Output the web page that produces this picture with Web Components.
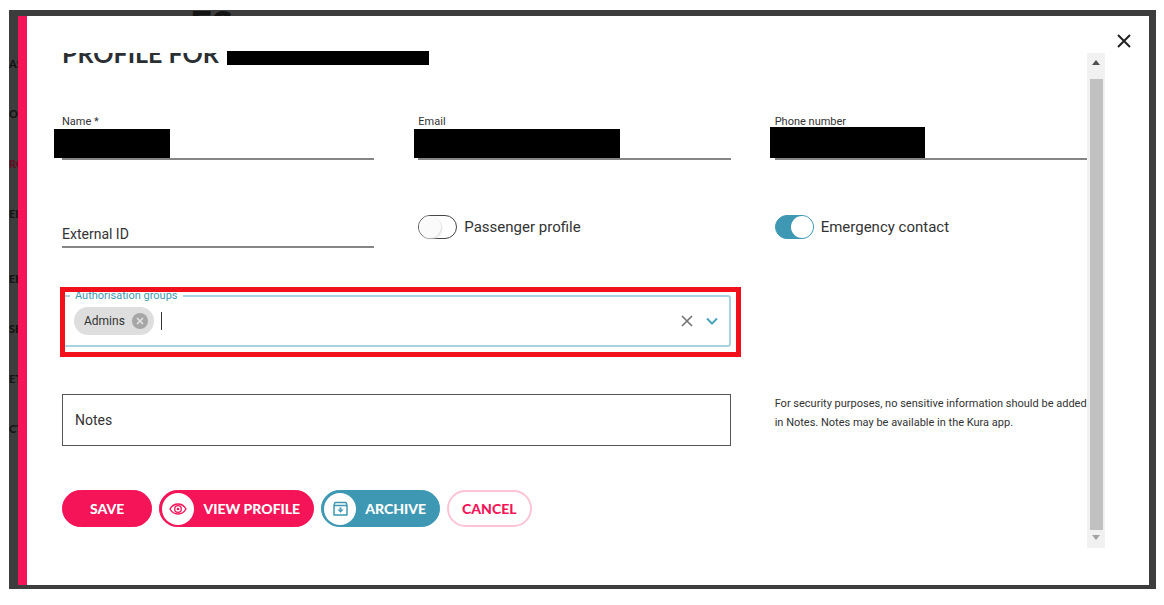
<!DOCTYPE html>
<html lang="en">
<head>
<meta charset="utf-8">
<title>Profile</title>
<style>
html,body{height:100%}
body{margin:0;background:#fff;color:#333;font-family:Roboto,sans-serif;box-sizing:border-box;padding:10px 8px 16px 9px}
</style>
</head>
<body>
<app-shell>
  <side-nav slot="behind"></side-nav>
  <profile-dialog></profile-dialog>
</app-shell>
<script>
const define = (name, html, setup) => {
  const tpl = document.createElement('template');
  tpl.innerHTML = '<style>*{box-sizing:border-box}</style>' + html;
  customElements.define(name, class extends HTMLElement {
    connectedCallback() {
      if (this.shadowRoot) return;
      this.attachShadow({mode: 'open'}).append(tpl.content.cloneNode(true));
      if (setup) setup(this, this.shadowRoot);
    }
  });
};

define('app-shell', `
<style>
:host{display:grid;height:100%;box-sizing:border-box;background:#3d3d3d;grid-template:minmax(0,1fr)/minmax(0,1fr)}
.behind,.front{grid-area:1/1;min-width:0;min-height:0}
.behind{overflow:hidden}
.front{display:grid;padding:6px 7px 4px 9px;position:relative}
</style>
<div class="behind"><slot name="behind"></slot></div>
<div class="front"><slot></slot></div>`);

define('side-nav', `
<style>
:host{display:grid;grid-template-columns:181px 1fr;align-items:start;color:#141414;font-family:Lato,sans-serif;font-weight:900}
nav{display:flex;flex-direction:column;gap:30px;padding-top:44px}
a{color:inherit;text-decoration:none;font-size:11px;line-height:20px}
a.current{color:#5c0f22}
a.group{margin-top:15px}
p{margin:0;height:6px;overflow:hidden;font-size:38px;line-height:28px}
</style>
<nav aria-label="Main">
<a href="#">AS</a><a href="#">OI</a><a href="#" class="current">RO</a><a href="#">EI</a>
<a href="#" class="group">EF</a><a href="#">SE</a><a href="#">ET</a><a href="#">CT</a>
</nav><p>ES</p>`);

define('text-field', `
<style>
:host{display:block;position:relative}
label{display:block;font-size:11px;line-height:14px}
input{display:block;width:100%;height:31px;border:0;border-bottom:2px solid #858585;border-radius:0;padding:0;background:none;font:14px Roboto,sans-serif;outline:0}
.mask{display:none;position:absolute;background:#000;left:var(--mask-x);width:var(--mask-w);bottom:2px;height:var(--mask-h,29px)}
:host([masked]) .mask{display:block}
:host([resting]) label{position:absolute;left:0;bottom:4px;font-size:14px;line-height:20px}
:host([resting]) input{height:42px}
:host([outlined]) label{position:absolute;left:13px;top:16px;font-size:14px;line-height:20px}
:host([outlined]) input{height:52px;border:1px solid #555;padding:0 13px}
</style>
<label for="f"><slot></slot></label><input id="f"><span class="mask"></span>`);

define('toggle-switch', `
<style>
:host{display:flex;align-items:center}
label{display:flex;align-items:center;gap:7px;font-size:15px;line-height:20px}
input{appearance:none;margin:0;width:39px;height:24px;border:1px solid #444;border-radius:12px;background:#fff;display:flex;align-items:center}
input::before{content:"";width:22px;height:22px;border-radius:50%;background:#fafafa;box-shadow:1px 1px 2px #ddd}
input:checked{background:#3e98b3;border-color:#3e98b3;justify-content:flex-end}
input:checked::before{background:#fff;box-shadow:none}
</style>
<label><input type="checkbox" role="switch"><slot></slot></label>`,
(el, root) => { root.querySelector('input').checked = el.hasAttribute('checked'); });

define('group-select', `
<style>
:host{display:block;position:relative}
fieldset{margin:0;border:2px solid #a9d3df;border-radius:3px;height:58px;min-width:0;padding:0 9px 0 10px;margin-top:-6px;color:#3e98b3}
legend{margin-left:-4px;padding:0 5px;font-size:11px;line-height:14px}
.row{display:flex;align-items:center;height:36px;color:#333}
.chip{display:flex;align-items:center;gap:7px;height:28px;padding:0 6px 0 10px;border-radius:14px;background:#dedede;font-size:12px}
button{display:flex;border:0;padding:0;background:none}
input{flex:1;min-width:0;border:0;outline:0;padding:0;background:none;font:14px Roboto,sans-serif;height:20px}
.caret{width:1px;height:18px;background:#333;margin-left:7px}
.tools{display:flex;gap:9px}
svg{display:block}
.mark{position:absolute;inset:-8px -10px -10px -2px;border:5px solid #f2101c;pointer-events:none}
</style>
<fieldset><legend><slot></slot></legend>
<div class="row">
<span class="chip">Admins<button aria-label="Remove Admins"><svg width="16" height="16" viewBox="0 0 16 16"><circle cx="8" cy="8" r="8" fill="#a6a6a6"/><path d="M5 5l6 6M11 5l-6 6" stroke="#e4e4e4" stroke-width="1.6"/></svg></button></span>
<span class="caret"></span><input aria-label="Authorisation groups">
<span class="tools">
<button aria-label="Clear"><svg width="16" height="16" viewBox="0 0 16 16"><path d="M3 3l10 10M13 3L3 13" stroke="#757575" stroke-width="1.7"/></svg></button>
<button aria-label="Open"><svg width="16" height="16" viewBox="0 0 16 16"><path d="M3 5.5l5 5 5-5" fill="none" stroke="#4ba3bd" stroke-width="2"/></svg></button>
</span></div></fieldset><span class="mark"></span>`);

define('pill-button', `
<style>
:host{display:block}
button{display:flex;align-items:center;height:37px;border:1px solid var(--c,#f41457);border-radius:19px;background:var(--c,#f41457);color:#fff;font:900 14px/20px Lato,sans-serif;padding:0 27px;white-space:nowrap}
:host([icon]) button{padding:0 13px 0 2px;gap:9px}
:host([outline]) button{background:#fff;color:#f41457;border:2px solid #fcc4d4;padding:0 13px}
::slotted(svg){display:block;background:#fff;border-radius:50%}
</style>
<button><slot name="icon"></slot><slot></slot></button>`);

define('scroll-rail', `
<style>
:host{display:flex;flex-direction:column;width:18px;background:#f1f1f1}
svg{display:block}
.thumb{flex:1;margin:0 2px 0 3px;background:#c1c1c1}
.up{padding:7px 5px 11px;height:26px}
.down{padding:5px 5px;height:18px}
</style>
<div class="up"><svg width="8" height="5" viewBox="0 0 8 5"><path d="M0 5L4 0l4 5z" fill="#505050"/></svg></div>
<div class="thumb"></div>
<div class="down"><svg width="8" height="5" viewBox="0 0 8 5"><path d="M0 0l4 5 4-5z" fill="#a3a3a3"/></svg></div>`);

define('profile-dialog', `
<style>
:host{display:grid;grid-template-columns:minmax(0,1fr) auto;min-height:0;position:relative;background:#fff;border-left:9px solid #f41457;padding:35px 44px 37px 27px}
scroll-rail{margin-top:2px}
.body{overflow:hidden;padding-left:8px}
h1{display:flex;align-items:flex-start;gap:8px;margin:0;height:17px;font:700 25px/30px Lato,sans-serif;color:#2b2f33}
.title{display:flex;align-items:flex-end;margin-top:2px;height:15px;overflow:hidden}
.redacted{width:202px;height:14px;background:#000}
.row{display:grid;grid-template-columns:repeat(3,minmax(0,1fr));column-gap:44px;margin-top:47px}
.row.second{margin-top:46px}
.wide{grid-column:span 2}
.hint{margin:0;font-size:11px;line-height:19px}
.actions{display:flex;gap:7px;margin-top:44px}
.close{position:absolute;right:17px;top:17px;border:0;background:none;padding:0}
svg{display:block}
</style>
<div class="body">
<h1><span class="title">PROFILE FOR</span><span class="redacted"></span></h1>
<div class="row">
<text-field masked style="--mask-x:-8px;--mask-w:116px">Name *</text-field>
<text-field masked style="--mask-x:-4px;--mask-w:206px">Email</text-field>
<text-field masked style="--mask-x:-5px;--mask-w:155px;--mask-h:31px">Phone number</text-field>
</div>
<div class="row second">
<text-field resting>External ID</text-field>
<toggle-switch>Passenger profile</toggle-switch>
<toggle-switch checked>Emergency contact</toggle-switch>
</div>
<div class="row"><group-select class="wide">Authorisation groups</group-select></div>
<div class="row">
<text-field outlined class="wide">Notes</text-field>
<p class="hint">For security purposes, no sensitive information should be added in Notes. Notes may be available in the Kura app.</p>
</div>
<div class="actions">
<pill-button>SAVE</pill-button>
<pill-button icon><svg slot="icon" width="32" height="32" viewBox="0 0 32 32" fill="none" stroke="#f41457"><path d="M8 16C10 12.500 13 11 16 11s6 1.500 8 5c-2 3.500-5 5-8 5s-6-1.500-8-5z" stroke-width="1.400"/><circle cx="16" cy="16" r="3.300" stroke-width="1.300"/><circle cx="16" cy="16" r="1.300" fill="#f41457" stroke="none"/></svg>VIEW PROFILE</pill-button>
<pill-button icon style="--c:#3e98b3"><svg slot="icon" width="32" height="32" viewBox="0 0 32 32" fill="none" stroke="#3e98b3"><path d="M10 12.500h13v9.500H10zM10 12l1-2.500h11l1 2.500" stroke-width="1.500" stroke-linejoin="round"/><path d="M16.500 14.500v2" stroke-width="2"/><path d="M13.500 16.500h6l-3 3.200z" fill="#3e98b3" stroke="none"/></svg>ARCHIVE</pill-button>
<pill-button outline>CANCEL</pill-button>
</div>
</div>
<scroll-rail></scroll-rail>
<button class="close" aria-label="Close"><svg width="16" height="16" viewBox="0 0 16 16"><path d="M2 2l12 12M14 2L2 14" stroke="#222" stroke-width="2"/></svg></button>`);
</script>
</body>
</html>
